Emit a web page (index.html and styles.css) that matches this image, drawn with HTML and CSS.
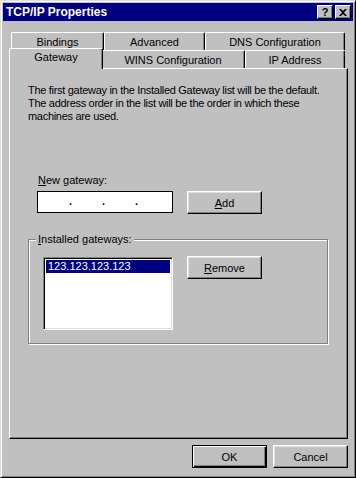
FILE: index.html
```html
<!DOCTYPE html>
<html lang="en">
<head>
    <meta charset="UTF-8">
    <title>TCP/IP Properties</title>
    <link rel="stylesheet" href="styles.css">
</head>
<body>
    <div class="window">
        <div class="titlebar">
            <span class="title">TCP/IP Properties</span>
            <div class="title-buttons">
                <span class="tbtn help">?</span>
                <span class="tbtn close">
                    <svg width="8" height="7" viewBox="0 0 8 7"><path d="M0 0h2l2 2 2-2h2L5 3.5 8 7H6L4 5 2 7H0l3-3.5z" fill="#000"/></svg>
                </span>
            </div>
        </div>
        <div class="body">
            <div class="tabs">
                <div class="tab-row back">
                    <div class="tab w-bind">Bindings</div>
                    <div class="tab w-adv">Advanced</div>
                    <div class="tab w-dns">DNS Configuration</div>
                </div>
                <div class="tab-row front">
                    <div class="tab w-gw selected">Gateway</div>
                    <div class="tab w-wins">WINS Configuration</div>
                    <div class="tab w-ip">IP Address</div>
                </div>
            </div>
            <div class="panel">
                <p class="intro">The first gateway in the Installed Gateway list will be the default.<br>The address order in the list will be the order in which these<br>machines are used.</p>
                <label class="field-label"><u>N</u>ew gateway:</label>
                <div class="gw-row">
                    <div class="ip-field">
                        <span class="dot">.</span><span class="dot">.</span><span class="dot">.</span>
                    </div>
                    <button class="btn"><u>A</u>dd</button>
                </div>
                <div class="group">
                    <span class="legend"><u>I</u>nstalled gateways:</span>
                    <div class="list">
                        <div class="list-item selected">123.123.123.123</div>
                    </div>
                    <button class="btn"><u>R</u>emove</button>
                </div>
            </div>
            <div class="actions">
                <button class="btn default">OK</button>
                <button class="btn">Cancel</button>
            </div>
        </div>
    </div>
</body>
</html>
```

FILE: styles.css
```css
body {
    margin: 0;
    background: #c0c0c0;
    font-family: "Liberation Sans", Arial, sans-serif;
    font-size: 11px;
    color: #000;
}
.window {
    width: 356px;
    height: 478px;
    box-sizing: border-box;
    background: #c0c0c0;
    border: 1px solid;
    border-color: #dfdfdf #000 #000 #dfdfdf;
    box-shadow: inset 1px 1px 0 #fff, inset -1px -1px 0 #808080;
    padding: 2px;
    display: flex;
    flex-direction: column;
}
.titlebar {
    height: 18px;
    background: #000080;
    display: flex;
    align-items: center;
    justify-content: space-between;
    padding: 0 2px 0 3px;
}
.title {
    color: #fff;
    font-weight: bold;
    font-size: 12px;
}
.title-buttons {
    display: flex;
}
.tbtn {
    width: 16px;
    height: 14px;
    box-sizing: border-box;
    background: #c0c0c0;
    border: 1px solid;
    border-color: #fff #000 #000 #fff;
    box-shadow: inset -1px -1px 0 #808080;
    display: flex;
    align-items: center;
    justify-content: center;
    font-weight: bold;
    font-size: 11px;
    line-height: 1;
}
.help {
    margin-right: 2px;
}
.body {
    padding: 11px 0 0 6px;
    display: flex;
    flex-direction: column;
}
.tabs {
    padding-left: 2px;
    width: 334px;
}
.tab-row {
    display: flex;
    height: 18px;
}
.tab {
    box-sizing: border-box;
    height: 18px;
    background: #c0c0c0;
    border: 1px solid;
    border-color: #fff #000 transparent #fff;
    border-bottom: none;
    border-radius: 2px 2px 0 0;
    box-shadow: inset -1px 0 0 #808080;
    text-align: center;
    line-height: 16px;
    padding-top: 1px;
}
.w-bind { width: 93px; }
.w-adv { width: 101px; }
.w-dns { width: 140px; }
.w-gw { width: 90px; }
.w-wins { width: 144px; }
.w-ip { width: 100px; }
.tab.selected {
    position: relative;
    z-index: 2;
    width: 94px;
    height: 21px;
    margin: -2px -2px 0 -2px;
    line-height: 15px;
    padding-top: 1px;
}
.panel {
    position: relative;
    z-index: 1;
    width: 339px;
    height: 371px;
    box-sizing: border-box;
    border: 1px solid;
    border-color: #fff #000 #000 #fff;
    box-shadow: inset -1px -1px 0 #808080;
    padding: 15px 0 0 18px;
    display: flex;
    flex-direction: column;
    align-items: flex-start;
}
.intro {
    margin: 0;
    width: 312px;
    line-height: 13px;
    letter-spacing: -0.3px;
    white-space: nowrap;
}
.field-label {
    margin: 51px 0 0 10px;
    line-height: 13px;
}
.gw-row {
    display: flex;
    align-items: flex-start;
    margin: 4px 0 0 9px;
    gap: 14px;
}
.ip-field {
    width: 136px;
    height: 22px;
    box-sizing: border-box;
    background: #fff;
    border: 1px solid #000;
    display: flex;
    justify-content: space-between;
    padding: 3px 34px 0 31px;
    font-weight: bold;
}
.btn {
    width: 75px;
    height: 23px;
    box-sizing: border-box;
    background: #c0c0c0;
    border: 1px solid;
    border-color: #fff #000 #000 #fff;
    box-shadow: inset -1px -1px 0 #808080, inset 1px 1px 0 #dfdfdf;
    font-family: "Liberation Sans", Arial, sans-serif;
    font-size: 11px;
    color: #000;
    padding: 0;
}
.btn.default {
    border: 1px solid #000;
    box-shadow: inset 1px 1px 0 #fff, inset -1px -1px 0 #000, inset -2px -2px 0 #808080;
}
.group {
    position: relative;
    margin-top: 25px;
    width: 300px;
    height: 105px;
    box-sizing: border-box;
    border: 1px solid #808080;
    box-shadow: inset 1px 1px 0 #fff, 1px 1px 0 #fff;
    display: flex;
    align-items: flex-start;
    gap: 14px;
    padding: 16px 0 0 14px;
}
.legend {
    position: absolute;
    top: -7px;
    left: 7px;
    padding: 0 2px 0 2px;
    background: #c0c0c0;
    line-height: 13px;
}
.list {
    width: 130px;
    height: 73px;
    box-sizing: border-box;
    background: #fff;
    border: 1px solid;
    border-color: #808080 #fff #fff #808080;
    box-shadow: inset 1px 1px 0 #000, inset -1px -1px 0 #dfdfdf;
    padding: 2px;
    margin-top: 1px;
}
.list-item {
    line-height: 13px;
    padding-left: 2px;
}
.list-item.selected {
    background: #000080;
    color: #fff;
}
.actions {
    display: flex;
    justify-content: flex-end;
    gap: 6px;
    width: 339px;
    margin-top: 6px;
}
```
